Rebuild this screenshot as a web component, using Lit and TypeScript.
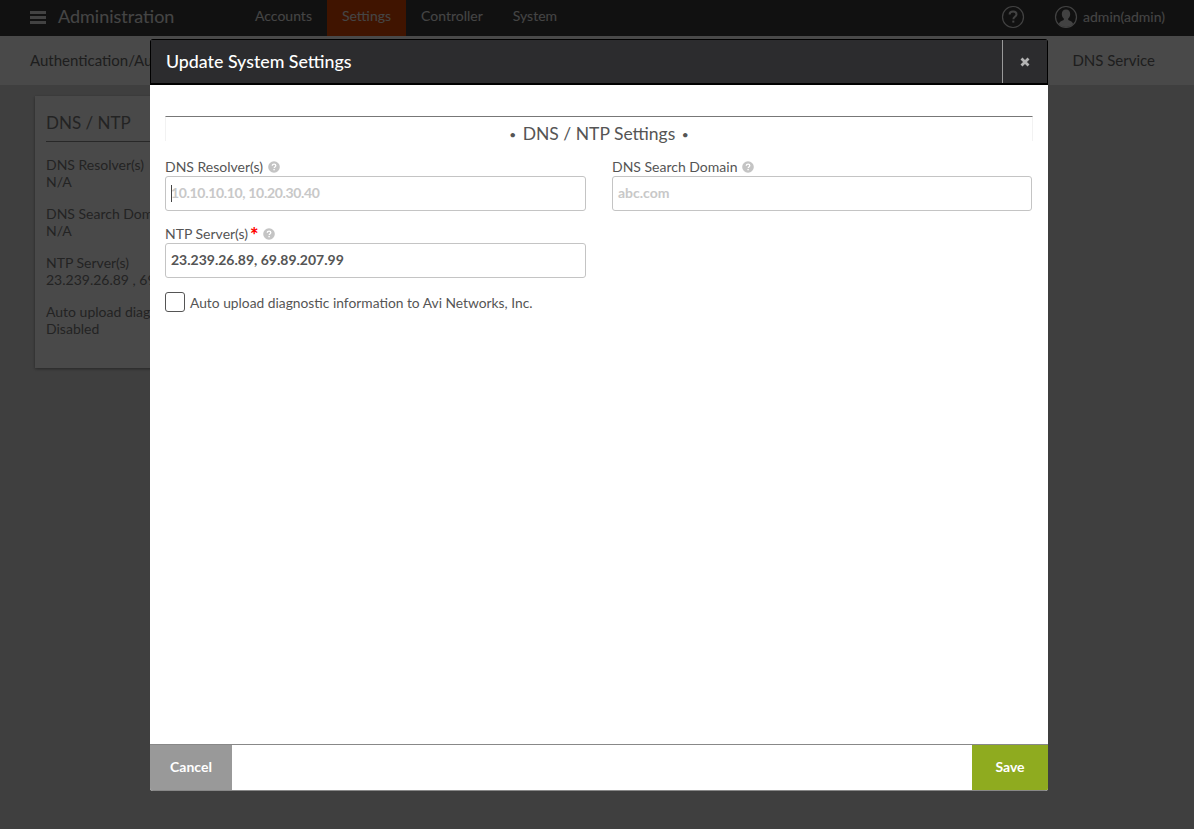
import { LitElement, html, css } from "lit";
import { customElement } from "lit/decorators.js";

const helpIcon = html`<svg class="help" viewBox="0 0 12 12" width="12" height="12">
  <circle cx="6" cy="6" r="5.8" fill="#c4c4c4"></circle>
  <path d="M4.3 4.7c0-1 .8-1.6 1.8-1.6s1.7.6 1.7 1.5c0 1.3-1.6 1.3-1.6 2.4" fill="none" stroke="#fff" stroke-width="1.3"></path>
  <rect x="5.4" y="7.9" width="1.4" height="1.4" fill="#fff"></rect>
</svg>`;

@customElement("app-root")
export class AppRoot extends LitElement {
  static styles = css`
    :host {
      display: block;
      position: relative;
      height: 829px;
      overflow: hidden;
      background: #d4d4d4;
      font-family: Lato, "Open Sans", sans-serif;
      color: #555;
    }
    .topbar {
      display: flex;
      align-items: stretch;
      height: 36px;
      background: #3a3a3a;
      color: #e6e6e6;
      font-size: 14px;
      line-height: 32px;
    }
    .burger {
      flex: none;
      width: 16px;
      height: 13px;
      margin: 11px 12px 0 30px;
      border-top: 3px solid #ddd;
      border-bottom: 3px solid #ddd;
      position: relative;
      box-sizing: border-box;
    }
    .burger::after {
      content: "";
      position: absolute;
      left: 0;
      right: 0;
      top: 2px;
      height: 3px;
      background: #ddd;
    }
    .title {
      font-size: 18px;
      line-height: 33px;
      width: 182px;
    }
    .tab {
      padding: 0 15px;
    }
    .tab.active {
      background: #d64400;
    }
    .spacer {
      flex: 1;
    }
    .top-icon {
      align-self: center;
      display: block;
      margin-top: -3px;
    }
    .user {
      display: flex;
      align-items: center;
      gap: 5px;
      margin: -3px 29px 0 29px;
      font-size: 14px;
    }
    .subnav {
      display: flex;
      justify-content: space-between;
      align-items: center;
      height: 49px;
      padding: 0 39px 2px 30px;
      box-sizing: border-box;
      background: #f4f4f4;
      font-size: 15px;
      color: #666;
    }
    .card {
      width: 400px;
      height: 272px;
      margin: 11px 0 0 35px;
      padding: 16px 11px;
      box-sizing: border-box;
      background: #f4f4f4;
      box-shadow: 0 1px 3px rgba(0, 0, 0, 0.4);
      font-size: 14px;
      line-height: 17px;
      color: #777;
    }
    .card h3 {
      margin: 0 0 14px;
      padding-bottom: 7px;
      border-bottom: 1px solid #888;
      font-size: 17px;
      line-height: 22px;
      font-weight: 400;
    }
    .card p {
      margin: 0 0 15px;
    }
    .backdrop {
      position: absolute;
      inset: 0;
      background: rgba(0, 0, 0, 0.7);
    }
    .modal {
      position: absolute;
      left: 150px;
      top: 39px;
      width: 898px;
      height: 752px;
      display: flex;
      flex-direction: column;
      background: #fff;
      border-radius: 3px;
      overflow: hidden;
    }
    .modal-head {
      display: flex;
      flex: none;
      height: 46px;
      box-sizing: border-box;
      background: #2c2c2e;
      border: 1px solid #000;
      border-bottom-width: 2px;
      color: #fff;
    }
    .modal-title {
      flex: 1;
      padding-left: 15px;
      font-size: 17.8px;
      line-height: 43px;
      font-weight: 500;
    }
    .close {
      display: flex;
      align-items: center;
      justify-content: center;
      width: 44px;
      border-left: 1px solid #9a9a9a;
    }
    .modal-body {
      flex: 1;
      padding: 31px 15px 0 15px;
    }
    .section {
      height: 24px;
      margin-bottom: 3px;
      border-top: 1px solid #777;
      border-left: 1px solid #f2f2f2;
      border-right: 1px solid #f2f2f2;
      text-align: center;
      font-size: 17.5px;
      line-height: 34px;
      color: #555;
    }
    .dot {
      font-size: 12px;
      margin: 0 2px;
      vertical-align: 1px;
    }
    .grid {
      display: grid;
      grid-template-columns: 421px 420px;
      column-gap: 26px;
    }
    .field {
      padding-top: 14px;
    }
    label {
      display: flex;
      align-items: center;
      gap: 5px;
      height: 17px;
      font-size: 14px;
      line-height: 17px;
      color: #555;
    }
    .star {
      color: #f00;
      font-weight: 900;
      font-size: 20px;
      line-height: 21px;
      margin: 0 -1px 0 -3px;
      height: 17px;
    }
    .input {
      height: 35px;
      box-sizing: border-box;
      margin-top: 1px;
      padding-left: 5px;
      border: 1px solid #c4c4c4;
      border-radius: 3px;
      font-size: 14px;
      font-weight: 700;
      line-height: 31px;
      color: #555;
      position: relative;
    }
    .input.empty {
      color: #c8c8c8;
    }
    .tight {
      letter-spacing: -0.33px;
    }
    .caret {
      position: absolute;
      left: 5px;
      top: 8px;
      width: 1px;
      height: 17px;
      background: #444;
    }
    .check {
      display: flex;
      align-items: center;
      gap: 5px;
      margin-top: 14px;
      font-size: 13.8px;
      color: #555;
    }
    .box {
      width: 18px;
      height: 18px;
      border: 1px solid #555;
      border-radius: 3px;
    }
    .modal-foot {
      display: flex;
      flex: none;
      justify-content: space-between;
      height: 47px;
      box-sizing: border-box;
      border-top: 1px solid #888;
      border-bottom: 1px solid #888;
      color: #fff;
      font-size: 14px;
      font-weight: 700;
      line-height: 43px;
      text-align: center;
    }
    .cancel {
      width: 82px;
      background: #999;
    }
    .save {
      width: 76px;
      background: #8fab1f;
    }
  `;

  render() {
    return html`
      <div class="topbar">
        <div class="burger"></div>
        <div class="title">Administration</div>
        <div class="tab">Accounts</div>
        <div class="tab active">Settings</div>
        <div class="tab">Controller</div>
        <div class="tab">System</div>
        <div class="spacer"></div>
        <svg class="top-icon" viewBox="0 0 24 24" width="24" height="24">
          <circle cx="12" cy="12" r="10.5" fill="none" stroke="#ddd" stroke-width="1.2"></circle>
          <path d="M8.6 9.5c0-2 1.5-3.1 3.5-3.1s3.4 1.1 3.4 2.9c0 2.5-3.1 2.5-3.1 4.9" fill="none" stroke="#ddd" stroke-width="2"></path>
          <rect x="11.3" y="15.6" width="2" height="2" fill="#ddd"></rect>
        </svg>
        <div class="user">
          <svg viewBox="0 0 24 24" width="24" height="24">
            <circle cx="12" cy="12" r="10.5" fill="none" stroke="#ddd" stroke-width="1.2"></circle>
            <path d="M12 4.5c-2.7 0-4.2 2-4.2 4.6 0 2 .9 3.6 2 4.5v1.3c-2.4 1-4.6 1.8-5 4.2 1.8 1.8 4.5 3 7.2 3s5.4-1.2 7.2-3c-.4-2.4-2.6-3.2-5-4.2v-1.3c1.1-.9 2-2.5 2-4.5 0-2.6-1.5-4.6-4.2-4.6z" fill="#ddd"></path>
          </svg>
          admin(admin)
        </div>
      </div>
      <div class="subnav">
        <span>Authentication/Authorization</span>
        <span>DNS Service</span>
      </div>
      <div class="card">
        <h3>DNS / NTP</h3>
        <p>DNS Resolver(s)<br />N/A</p>
        <p>DNS Search Domain<br />N/A</p>
        <p>NTP Server(s)<br />23.239.26.89 , 69.89.207.99</p>
        <p>Auto upload diagnostic information<br />Disabled</p>
      </div>

      <div class="backdrop"></div>
      <div class="modal">
        <div class="modal-head">
          <div class="modal-title">Update System Settings</div>
          <div class="close">
            <svg viewBox="0 0 10 10" width="10" height="10">
              <path d="M1.5 1.5l7 7M8.5 1.5l-7 7" stroke="#b4b4b4" stroke-width="2.8"></path>
            </svg>
          </div>
        </div>
        <div class="modal-body">
          <div class="section"><span class="dot">•</span> DNS / NTP Settings <span class="dot">•</span></div>
          <div class="grid">
            <div class="field">
              <label>DNS Resolver(s) ${helpIcon}</label>
              <div class="input empty tight"><span class="caret"></span>10.10.10.10, 10.20.30.40</div>
            </div>
            <div class="field">
              <label>DNS Search Domain ${helpIcon}</label>
              <div class="input empty">abc.com</div>
            </div>
            <div class="field">
              <label>NTP Server(s) <span class="star">*</span> ${helpIcon}</label>
              <div class="input">23.239.26.89, 69.89.207.99</div>
            </div>
          </div>
          <div class="check">
            <span class="box"></span>
            Auto upload diagnostic information to Avi Networks, Inc.
          </div>
        </div>
        <div class="modal-foot">
          <div class="cancel">Cancel</div>
          <div class="save">Save</div>
        </div>
      </div>
    `;
  }
}
